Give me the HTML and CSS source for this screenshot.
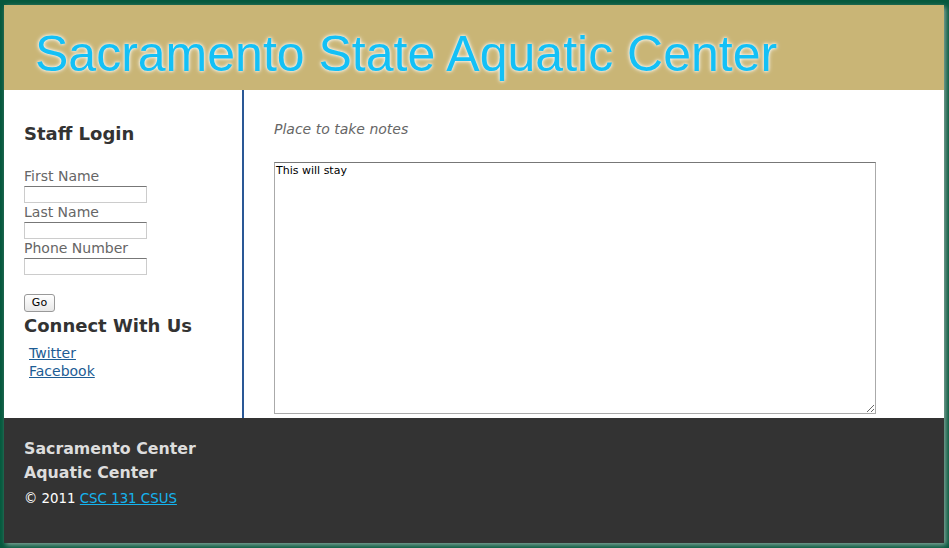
FILE: index.html
```html
<!DOCTYPE html>
<html>
<head>
<meta charset="utf-8">
<title>Sacramento State Aquatic Center</title>
<link rel="stylesheet" href="styles.css">
</head>
<body>
<div class="page">
  <header class="masthead">
    <h1 class="site-title">Sacramento State Aquatic Center</h1>
  </header>
  <div class="columns">
    <aside class="sidebar">
      <h2 class="side-heading">Staff Login</h2>
      <form class="login">
        <label class="field-label">First Name</label>
        <input class="field" type="text">
        <label class="field-label">Last Name</label>
        <input class="field" type="text">
        <label class="field-label">Phone Number</label>
        <input class="field" type="text">
        <button class="go" type="button">Go</button>
      </form>
      <h2 class="side-heading connect">Connect With Us</h2>
      <ul class="links">
        <li><a href="#">Twitter</a></li>
        <li><a href="#">Facebook</a></li>
      </ul>
    </aside>
    <main class="main">
      <p class="notes-label">Place to take notes</p>
      <textarea class="notes">This will stay</textarea>
    </main>
  </div>
  <footer class="footer">
    <p class="footer-name">Sacramento Center<br>Aquatic Center</p>
    <p class="copy">© 2011 <a href="#">CSC 131 CSUS</a></p>
  </footer>
</div>
</body>
</html>
```

FILE: styles.css
```css
html, body {
  margin: 0;
  padding: 0;
}
body {
  background: #05583d;
  font-family: "DejaVu Sans", Verdana, sans-serif;
  height: 548px;
  overflow: hidden;
}
.page {
  width: 940px;
  margin: 5px 0 0 4px;
  background: #fff;
  box-shadow: 2px 2px 5px rgba(190, 200, 195, 0.7);
}
.masthead {
  background: #c9b576;
  height: 85px;
  overflow: hidden;
}
.site-title {
  margin: 0;
  padding: 19px 0 0 31px;
  font-family: "Liberation Sans", Arial, sans-serif;
  font-weight: normal;
  font-size: 50px;
  line-height: 60px;
  color: #14c0f6;
  text-shadow: 0 0 3px #fff, 0 0 5px rgba(255,255,255,0.8);
}
.columns {
  display: flex;
  height: 328px;
}
.sidebar {
  width: 218px;
  padding: 0 0 0 20px;
  border-right: 2px solid #2a5896;
}
.side-heading {
  margin: 0;
  font-size: 18px;
  font-weight: bold;
  color: #333;
  line-height: 22px;
}
.sidebar > .side-heading:first-child {
  margin-top: 33px;
}
.login {
  display: flex;
  flex-direction: column;
  align-items: flex-start;
  margin-top: 22px;
}
.field-label {
  font-size: 14px;
  color: #666;
  line-height: 19px;
}
.field {
  width: 123px;
  height: 17px;
  box-sizing: border-box;
  border: 1px solid #ccc;
  border-top-color: #777;
  padding: 0;
  margin: 0;
  background: #fff;
}
.go {
  margin-top: 19px;
  height: 18px;
  width: 31px;
  padding: 0;
  font-family: "DejaVu Sans", sans-serif;
  font-size: 11px;
  background: linear-gradient(#fff, #e8e8e8);
  border: 1px solid #999;
  border-radius: 3px;
  color: #000;
  line-height: 14px;
}
.connect {
  margin-top: 3px;
}
.links {
  list-style: none;
  margin: 7px 0 0 5px;
  padding: 0;
  font-size: 14px;
  line-height: 18px;
}
.links a {
  color: #1d5c94;
}
.main {
  flex: 1;
  padding: 0 0 0 30px;
}
.notes-label {
  margin: 30px 0 0;
  font-size: 14px;
  font-style: italic;
  color: #666;
  line-height: 18px;
}
.notes {
  display: block;
  margin-top: 24px;
  width: 602px;
  height: 252px;
  box-sizing: border-box;
  border: 1px solid #aaa;
  border-top-color: #777;
  padding: 1px;
  font-family: "DejaVu Sans", sans-serif;
  font-size: 11px;
  color: #000;
  resize: both;
}
.footer {
  background: #333;
  height: 125px;
  padding: 19px 20px 0;
  box-sizing: border-box;
}
.footer-name {
  margin: 0;
  font-size: 15.8px;
  font-weight: bold;
  color: #ddd;
  line-height: 24px;
}
.copy {
  margin: 6px 0 0;
  font-size: 13.35px;
  color: #fff;
  line-height: 16px;
}
.copy a {
  color: #15b4ef;
}
```
